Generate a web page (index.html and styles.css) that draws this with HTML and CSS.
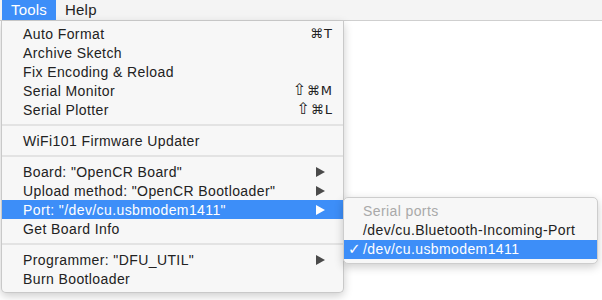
FILE: index.html
```html
<!DOCTYPE html>
<html lang="en">
<head>
    <meta charset="UTF-8">
    <title>Tools menu</title>
    <link rel="stylesheet" href="styles.css">
</head>
<body>

    <div class="menubar">
        <span class="menubar-item active">Tools</span>
        <span class="menubar-item">Help</span>
    </div>

    <div class="menu">
        <div class="item"><span>Auto Format</span><span class="key">⌘T</span></div>
        <div class="item"><span>Archive Sketch</span></div>
        <div class="item"><span>Fix Encoding &amp; Reload</span></div>
        <div class="item"><span>Serial Monitor</span><span class="key"><span class="shift">⇧</span>⌘M</span></div>
        <div class="item"><span>Serial Plotter</span><span class="key"><span class="shift">⇧</span>⌘L</span></div>
        <div class="sep"></div>
        <div class="item"><span>WiFi101 Firmware Updater</span></div>
        <div class="sep"></div>
        <div class="item"><span>Board: "OpenCR Board"</span><svg class="arrow" viewBox="0 0 9 10"><path d="M0 0L9 5L0 10Z"/></svg></div>
        <div class="item"><span>Upload method: "OpenCR Bootloader"</span><svg class="arrow" viewBox="0 0 9 10"><path d="M0 0L9 5L0 10Z"/></svg></div>
        <div class="item selected"><span>Port: "/dev/cu.usbmodem1411"</span><svg class="arrow" viewBox="0 0 9 10"><path d="M0 0L9 5L0 10Z"/></svg></div>
        <div class="item"><span>Get Board Info</span></div>
        <div class="sep"></div>
        <div class="item"><span>Programmer: "DFU_UTIL"</span><svg class="arrow" viewBox="0 0 9 10"><path d="M0 0L9 5L0 10Z"/></svg></div>
        <div class="item"><span>Burn Bootloader</span></div>
    </div>

    <div class="submenu">
        <div class="sub-item header">Serial ports</div>
        <div class="sub-item">/dev/cu.Bluetooth-Incoming-Port</div>
        <div class="sub-item selected"><span class="check">✓</span>/dev/cu.usbmodem1411</div>
    </div>

</body>
</html>
```

FILE: styles.css
```css
body {
    font-family: "Liberation Sans", Arial, sans-serif;
    font-size: 14px;
    letter-spacing: 0.4px;
    color: #222;
    margin: 0;
    background-color: #fff;
    width: 602px;
    height: 300px;
    overflow: hidden;
    position: relative;
}
.menubar {
    display: flex;
    height: 20px;
    padding-left: 2px;
    background-color: #f4f4f4;
    border-bottom: 1px solid #cfcfcf;
}
.menubar-item {
    line-height: 20px;
    padding: 0 9px;
    font-size: 15px;
    letter-spacing: 0.2px;
}
.menubar-item.active {
    background-color: #3d8ef8;
    color: #fff;
}
.menu {
    width: 341px;
    margin-left: 1px;
    padding: 3px 0 4px;
    background-color: #f7f7f7;
    border: 1px solid #c9c9c9;
    border-top: none;
    border-radius: 0 0 5px 5px;
    box-shadow: 0 3px 10px rgba(0, 0, 0, 0.2);
}
.item {
    display: flex;
    justify-content: space-between;
    align-items: center;
    height: 19px;
    padding: 0 10px 0 21px;
}
.item.selected {
    background-color: #3d8ef8;
    color: #fff;
}
.key {
    font-family: "DejaVu Sans", sans-serif;
    font-size: 13px;
    letter-spacing: 1px;
}
.shift {
    font-size: 16px;
    line-height: 13px;
}
.arrow {
    width: 9px;
    height: 10px;
    fill: #4a4a4a;
    margin-right: 8px;
}
.item.selected .arrow {
    fill: #fff;
}
.sep {
    height: 2px;
    margin: 5px 0;
    background-color: #e3e3e3;
}
.submenu {
    position: absolute;
    left: 343px;
    top: 197px;
    width: 253px;
    padding: 4px 0;
    background-color: #f7f7f7;
    border: 1px solid #cdcdcd;
    border-radius: 5px;
    box-shadow: 0 3px 10px rgba(0, 0, 0, 0.2);
}
.sub-item {
    height: 19px;
    line-height: 19px;
    padding-left: 19px;
}
.sub-item.header {
    color: #a9a9a9;
}
.sub-item.selected {
    position: relative;
    background-color: #3d8ef8;
    color: #fff;
}
.check {
    position: absolute;
    left: 4px;
    font-family: "DejaVu Sans", sans-serif;
    font-size: 15px;
    font-weight: bold;
}
```
